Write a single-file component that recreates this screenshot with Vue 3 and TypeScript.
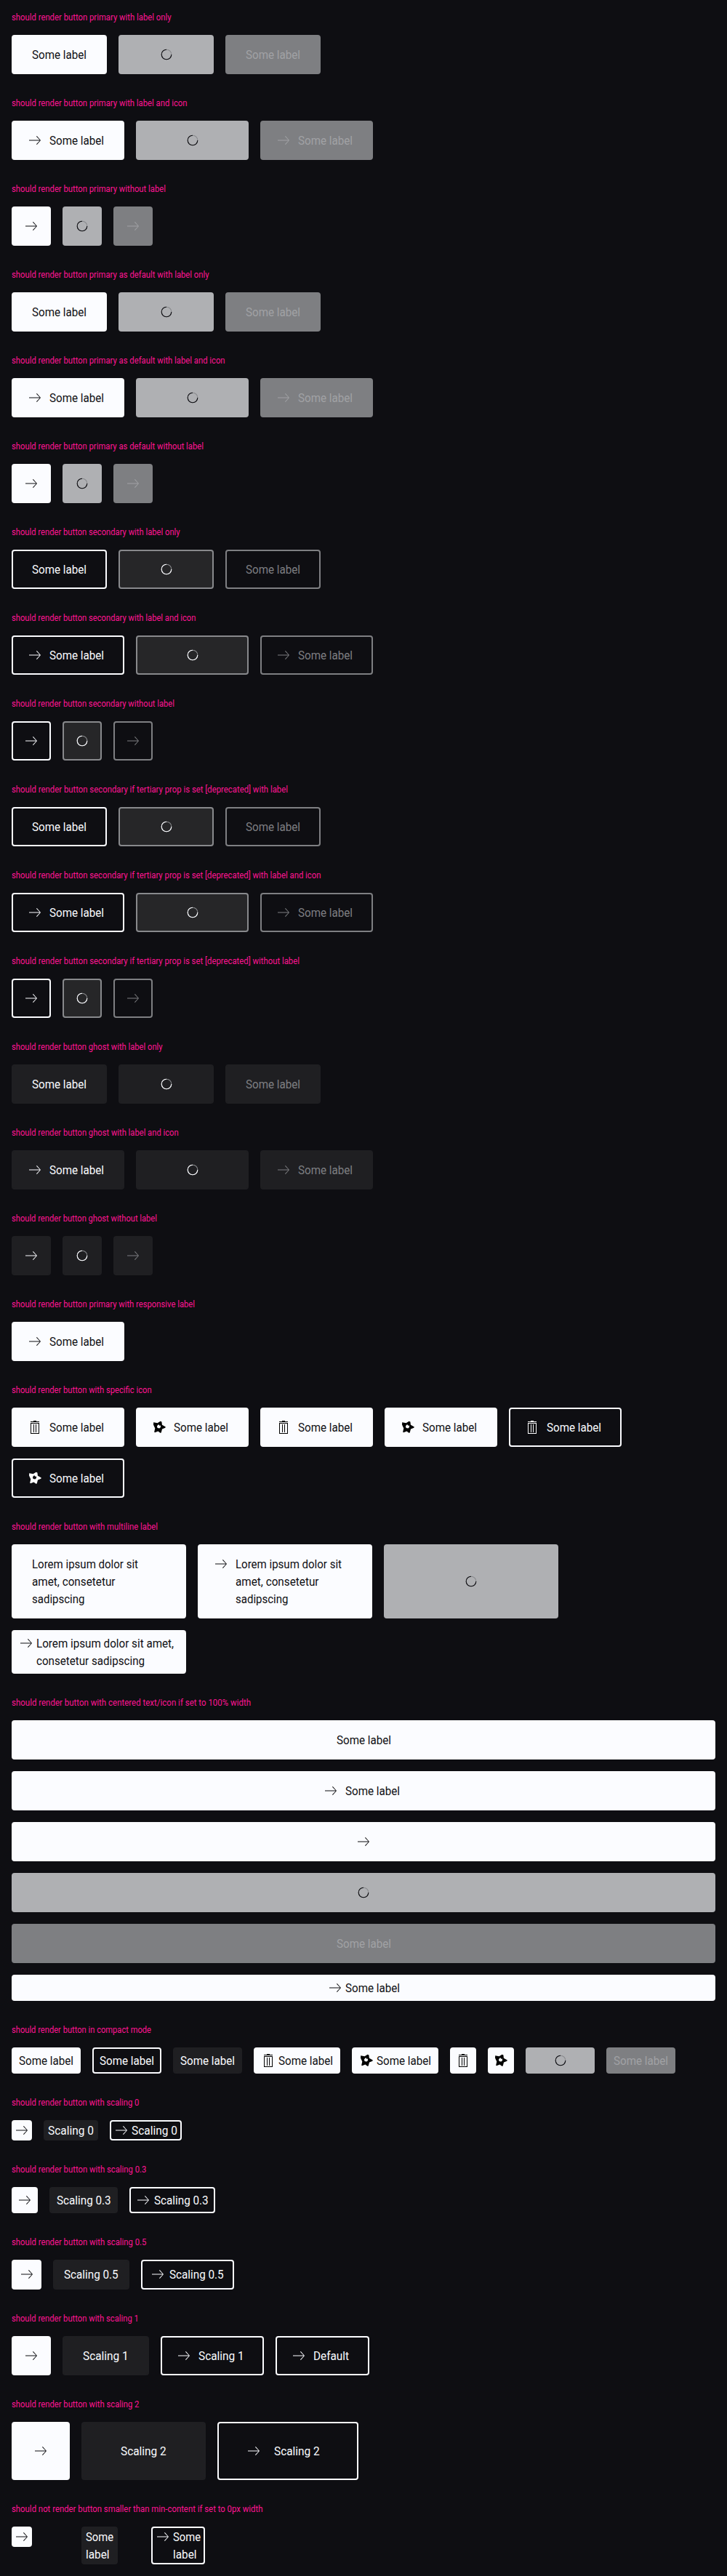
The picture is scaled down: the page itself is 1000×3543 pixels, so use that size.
<script setup lang="ts">
import type { Directive } from 'vue'

type Variant = 'primary' | 'secondary' | 'ghost'
type State = 'normal' | 'loading' | 'disabled'
type Icon = 'arrow' | 'delete' | 'star'

interface Line { text: string; w: number }
interface Btn {
  variant: Variant
  state: State
  icon?: Icon
  lines?: Line[]
  size?: string
}
interface Section { title: string; w: number; buttons: Btn[]; layout?: string }

// Advance width of every label, in pixels at the 16px text size
const widths: Record<string, number> = {
  'Some label': 75,
  'Some': 38,
  'label': 32.5,
  'Scaling 0': 63,
  'Scaling 0.3': 74.7,
  'Scaling 0.5': 74.7,
  'Scaling 1': 62.7,
  'Scaling 2': 62.7,
  'Default': 49,
  'Lorem ipsum dolor sit': 146,
  'amet, consetetur': 114.5,
  'sadipscing': 72.5,
  'Lorem ipsum dolor sit amet,': 189,
  'consetetur sadipscing': 149,
}

const lines = (...t: string[]): Line[] => t.map((text) => ({ text, w: widths[text] }))
const some = lines('Some label')

const trio = (variant: Variant, label: boolean, icon: boolean): Btn[] =>
  (['normal', 'loading', 'disabled'] as State[]).map((state) => ({
    variant,
    state,
    icon: icon ? 'arrow' : undefined,
    lines: label ? some : undefined,
  }))

const btn = (variant: Variant, icon?: Icon, l?: Line[], extra: Partial<Btn> = {}): Btn => ({
  variant,
  state: 'normal',
  icon,
  lines: l,
  ...extra,
})

const scaled = (size: string, text: string): Btn[] => [
  btn('primary', 'arrow', undefined, { size }),
  btn('ghost', undefined, lines(text), { size }),
  btn('secondary', 'arrow', lines(text), { size }),
]

const s = 'should render button '
const lorem = lines('Lorem ipsum dolor sit', 'amet, consetetur', 'sadipscing')
const sections: Section[] = [
  { title: s + 'primary with label only', w: 219.6, buttons: trio('primary', true, false) },
  { title: s + 'primary with label and icon', w: 241.5, buttons: trio('primary', true, true) },
  { title: s + 'primary without label', w: 212, buttons: trio('primary', false, true) },
  { title: s + 'primary as default with label only', w: 271.6, buttons: trio('primary', true, false) },
  { title: s + 'primary as default with label and icon', w: 293.6, buttons: trio('primary', true, true) },
  { title: s + 'primary as default without label', w: 264, buttons: trio('primary', false, true) },
  { title: s + 'secondary with label only', w: 231.6, buttons: trio('secondary', true, false) },
  { title: s + 'secondary with label and icon', w: 253.4, buttons: trio('secondary', true, true) },
  { title: s + 'secondary without label', w: 224, buttons: trio('secondary', false, true) },
  { title: s + 'secondary if tertiary prop is set [deprecated] with label', w: 380, buttons: trio('secondary', true, false) },
  { title: s + 'secondary if tertiary prop is set [deprecated] with label and icon', w: 425.5, buttons: trio('secondary', true, true) },
  { title: s + 'secondary if tertiary prop is set [deprecated] without label', w: 396, buttons: trio('secondary', false, true) },
  { title: s + 'ghost with label only', w: 207.6, buttons: trio('ghost', true, false) },
  { title: s + 'ghost with label and icon', w: 229.6, buttons: trio('ghost', true, true) },
  { title: s + 'ghost without label', w: 200, buttons: trio('ghost', false, true) },
  { title: s + 'primary with responsive label', w: 252, buttons: [btn('primary', 'arrow', some)] },
  {
    title: s + 'with specific icon',
    w: 192.6,
    buttons: [
      btn('primary', 'delete', some),
      btn('primary', 'star', some),
      btn('primary', 'delete', some),
      btn('primary', 'star', some),
      btn('secondary', 'delete', some),
      btn('secondary', 'star', some),
    ],
  },
  {
    title: s + 'with multiline label',
    w: 201,
    layout: 'fixed',
    buttons: [
      btn('primary', undefined, lorem),
      btn('primary', 'arrow', lorem),
      btn('primary', undefined, lorem, { state: 'loading' }),
      btn('primary', 'arrow', lines('Lorem ipsum dolor sit amet,', 'consetetur sadipscing'), { size: 'compact' }),
    ],
  },
  {
    title: s + 'with centered text/icon if set to 100% width',
    w: 329,
    layout: 'stretch',
    buttons: [
      btn('primary', undefined, some),
      btn('primary', 'arrow', some),
      btn('primary', 'arrow'),
      btn('primary', undefined, some, { state: 'loading' }),
      btn('primary', undefined, some, { state: 'disabled' }),
      btn('primary', 'arrow', some, { size: 'compact' }),
    ],
  },
  {
    title: s + 'in compact mode',
    w: 192,
    buttons: [
      btn('primary', undefined, some, { size: 'compact' }),
      btn('secondary', undefined, some, { size: 'compact' }),
      btn('ghost', undefined, some, { size: 'compact' }),
      btn('primary', 'delete', some, { size: 'compact' }),
      btn('primary', 'star', some, { size: 'compact' }),
      btn('primary', 'delete', undefined, { size: 'compact' }),
      btn('primary', 'star', undefined, { size: 'compact' }),
      btn('primary', undefined, some, { size: 'compact', state: 'loading' }),
      btn('primary', undefined, some, { size: 'compact', state: 'disabled' }),
    ],
  },
  { title: s + 'with scaling 0', w: 175.4, buttons: scaled('s0', 'Scaling 0') },
  { title: s + 'with scaling 0.3', w: 185.4, buttons: scaled('s03', 'Scaling 0.3') },
  { title: s + 'with scaling 0.5', w: 185.4, buttons: scaled('s05', 'Scaling 0.5') },
  {
    title: s + 'with scaling 1',
    w: 174.8,
    buttons: [...scaled('s1', 'Scaling 1'), btn('secondary', 'arrow', lines('Default'))],
  },
  { title: s + 'with scaling 2', w: 175.4, buttons: scaled('s2', 'Scaling 2') },
  {
    title: 'should not render button smaller than min-content if set to 0px width',
    w: 345.4,
    layout: 'cells',
    buttons: [
      btn('primary', 'arrow', undefined, { size: 's0' }),
      btn('ghost', undefined, lines('Some', 'label'), { size: 's0' }),
      btn('secondary', 'arrow', lines('Some', 'label'), { size: 's0' }),
    ],
  },
]

// Condenses a line of text so that it takes exactly the given advance width
const vFit: Directive<HTMLElement, number> = {
  mounted(el, { value }) {
    const natural = el.getBoundingClientRect().width
    el.style.width = `${value}px`
    el.style.transform = `scaleX(${value / natural})`
  },
}
</script>

<template>
  <main class="page">
    <section v-for="sec in sections" :key="sec.title" class="section">
      <h2 class="title"><span v-fit="sec.w" class="fit">{{ sec.title }}</span></h2>
      <div class="row" :class="sec.layout">
        <div v-for="(b, i) in sec.buttons" :key="i" class="cell">
          <button
            type="button"
            class="btn"
            :class="[b.variant, b.state, b.size, { 'has-icon': b.icon && b.lines, 'icon-only': !b.lines }]"
          >
            <svg v-if="b.icon === 'arrow'" class="icon" viewBox="0 0 24 24">
              <path d="m14.76 6-.77.81 4.61 4.69H4v1h14.6l-4.61 4.7.77.8L20 12z" />
            </svg>
            <svg v-else-if="b.icon === 'delete'" class="icon pure" viewBox="0 0 24 24">
              <path d="M10 3h4v1h4v1H6V4h4zM6 6h12v15H6zm1 1v13h10V7zm3 1h1v11h-1zm3 0h1v11h-1z" fill-rule="evenodd" />
            </svg>
            <svg v-else-if="b.icon === 'star'" class="icon pure" viewBox="0 0 24 24">
              <path
                fill-rule="evenodd"
                d="M4.2 5.2 9.6 6.2 13.6 3.8 15.4 4.6 15.9 8.8 20.8 11.4 20.4 12.8 16 14.6 14.7 19.6 13.4 19.8 10.4 17.6 6 19.2 5.2 18.4 6.3 13.4 4 8.6ZM10.6 8.4 8.9 10.6 9.6 13 12.4 13.6 14.2 11.8 13.6 9.2 12.4 10 11.8 8.4Z"
              />
            </svg>
            <span v-if="b.lines" class="label">
              <span v-for="l in b.lines" :key="l.text" class="line"><span v-fit="l.w" class="fit">{{ l.text }}</span></span>
            </span>
            <svg v-if="b.state === 'loading'" class="spinner" viewBox="0 0 24 24">
              <circle cx="12" cy="12" r="6.8" />
              <path d="M12 5.2A6.8 6.8 0 0 0 12 18.8A6.8 6.8 0 0 0 18.8 12" />
            </svg>
          </button>
        </div>
      </div>
    </section>
  </main>
</template>

<style>
body {
  margin: 0;
  background: #0e0e12;
}
</style>

<style scoped>
.page {
  background: #0e0e12;
  min-height: 3543px;
  font-family: Roboto, "Liberation Sans", sans-serif;
}
.section {
  padding: 16px;
}
.title {
  margin: 0 0 16px;
  height: 16px;
  font-size: 12px;
  line-height: 16px;
  font-weight: 400;
  color: #ff1493;
}
.fit {
  display: inline-block;
  white-space: nowrap;
  transform-origin: 0 50%;
}
.row {
  display: flex;
  flex-wrap: wrap;
  align-items: flex-start;
  gap: 16px;
}
.cell {
  display: flex;
}
.fixed .cell {
  width: 240px;
}
.fixed .btn {
  flex: 1;
  justify-content: flex-start;
}
.stretch .cell {
  width: 100%;
}
.stretch .btn {
  flex: 1;
}
.cells .cell {
  width: 80px;
}
.btn {
  --y: 13px;
  --x: 26px;
  --xi: 18px;
  --gap: 8px;
  position: relative;
  display: flex;
  flex: none;
  box-sizing: border-box;
  align-items: flex-start;
  justify-content: center;
  gap: var(--gap);
  padding: var(--y) var(--x);
  border: 2px solid transparent;
  border-radius: 4px;
  font: inherit;
  font-size: 16px;
  line-height: 24px;
  text-align: left;
}
.has-icon {
  padding-left: var(--xi);
}
.icon-only {
  padding: var(--y);
}
.compact {
  --y: 4px;
  --x: 8px;
  --xi: 6px;
  --gap: 2px;
}
.s0 {
  --y: 0px;
  --x: 4px;
  --xi: 2px;
  --gap: 2px;
}
.s03 {
  --y: 3.9px;
  --x: 7.8px;
  --xi: 5.4px;
  --gap: 2.4px;
}
.s05 {
  --y: 6.5px;
  --x: 13px;
  --xi: 9px;
  --gap: 4px;
}
.s2 {
  --y: 26px;
  --x: 52px;
  --xi: 36px;
  --gap: 16px;
}
.primary {
  background: #fbfcff;
  border-color: #fbfcff;
  color: #0e0e12;
}
.primary.loading {
  background: #afb0b3;
  border-color: #afb0b3;
}
.primary.disabled {
  background: #7e7f82;
  border-color: #7e7f82;
  color: #a1a2a5;
}
.secondary {
  background: transparent;
  border-color: #fbfcff;
  color: #fbfcff;
}
.secondary.loading {
  background: #262628;
  border-color: #88898c;
}
.secondary.disabled {
  border-color: #7e7f82;
  color: #7e7f82;
}
.ghost {
  background: #1f1f22;
  border-color: #1f1f22;
  color: #fbfcff;
}
.ghost.disabled {
  color: #7e7f82;
}
.loading .icon,
.loading .label {
  visibility: hidden;
}
.icon {
  flex: none;
  width: 24px;
  height: 24px;
  fill: currentColor;
}
.primary .pure {
  fill: #000;
}
.secondary .pure {
  fill: #fff;
}
.label {
  flex: none;
  display: flex;
  flex-direction: column;
  margin: 1px 0 -1px;
}
.line {
  display: block;
  height: 24px;
}
.spinner {
  position: absolute;
  left: calc(50% - 12px);
  top: calc(50% - 12px);
  width: 24px;
  height: 24px;
  fill: none;
  stroke: #88898c;
  stroke-width: 1.1;
}
.spinner path {
  stroke: currentColor;
}
</style>
